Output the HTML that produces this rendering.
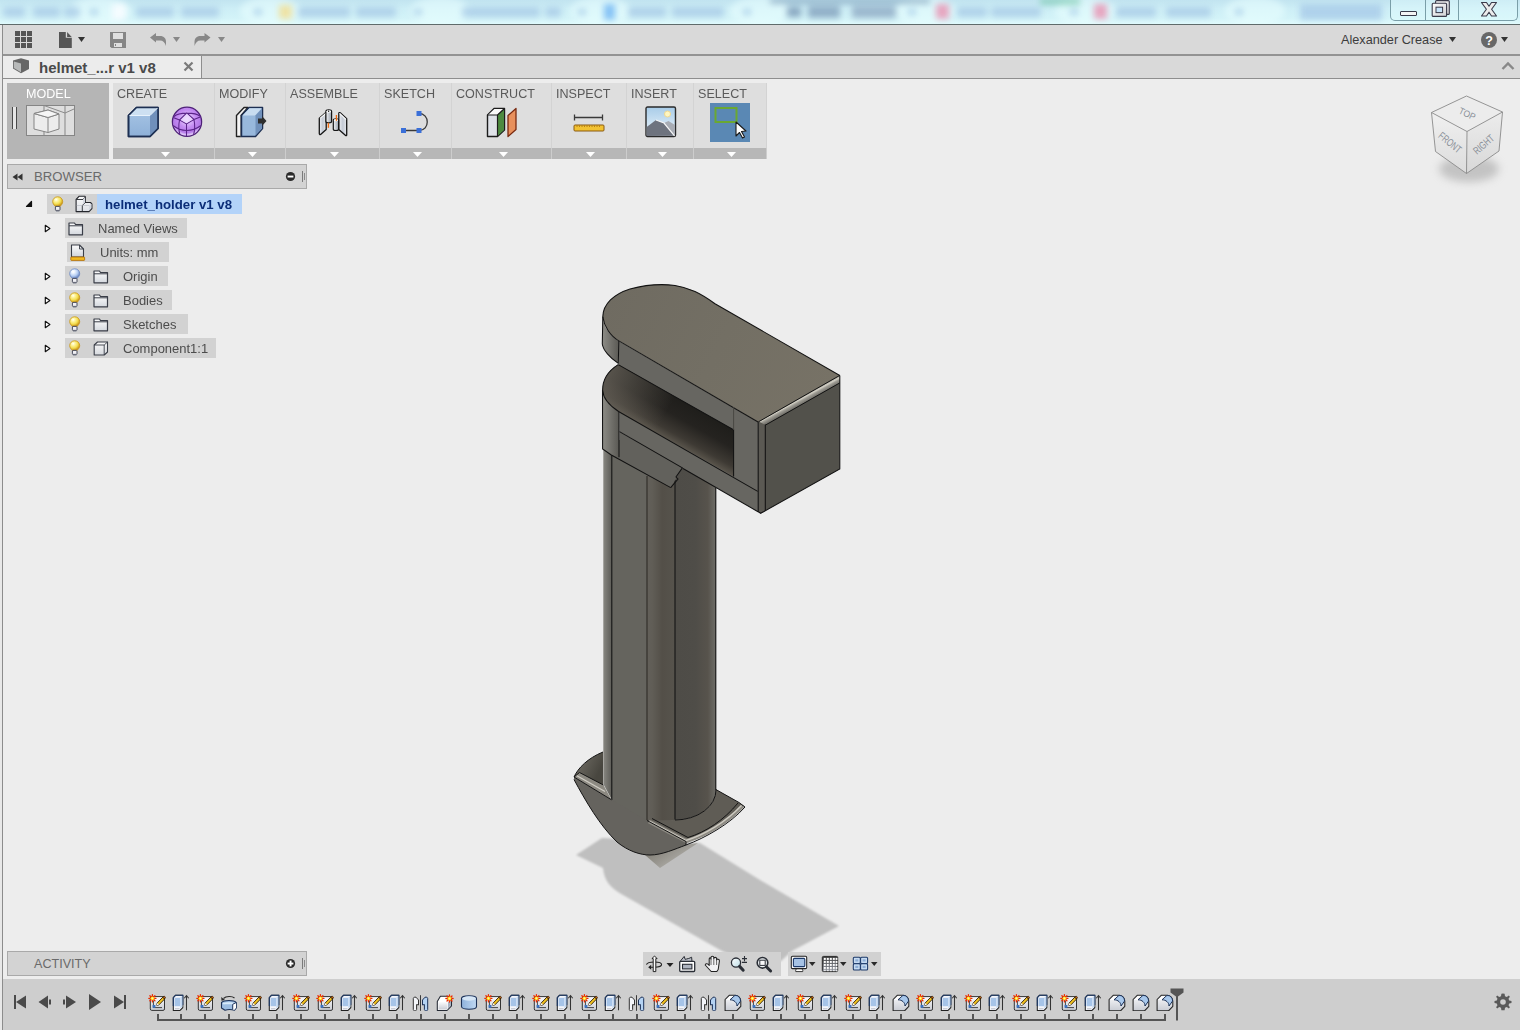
<!DOCTYPE html>
<html><head><meta charset="utf-8">
<style>
*{margin:0;padding:0;box-sizing:border-box}
html,body{width:1520px;height:1030px;overflow:hidden;background:#ededed;font-family:"Liberation Sans",sans-serif}
.a{position:absolute}
#title{left:0;top:0;width:1520px;height:24px;background:linear-gradient(180deg,#c2e4f0 0%,#cdeef6 35%,#d3f3f8 75%,#e0fafc 100%);overflow:hidden}
#tline{left:0;top:24px;width:1520px;height:1px;background:#5f6b6b}
#toolbar{left:0;top:25px;width:1520px;height:29px;background:#d9d9d9}
#tbline{left:0;top:54px;width:1520px;height:2px;background:#939393}
#tabrow{left:0;top:56px;width:1520px;height:22px;background:#d9d9d9}
#tabline{left:0;top:78px;width:1520px;height:1px;background:#8e8e8e}
#vp{left:0;top:79px;width:1520px;height:900px;background:#ededed}
#lborder{left:2px;top:25px;width:1px;height:1005px;background:#8c8c8c}
#lborder2{left:0;top:25px;width:2px;height:1005px;background:#e8e8e8}
.txt{white-space:nowrap;line-height:1}
</style></head><body>
<div id="title" class="a">
<div class="a" style="left:0;top:0;width:1520px;height:24px;filter:blur(3px)">
 <div class="a" style="left:70px;top:-4px;width:60px;height:30px;background:#eaffff;opacity:.55;border-radius:50%"></div>
 <div class="a" style="left:240px;top:-4px;width:60px;height:30px;background:#eaffff;opacity:.55;border-radius:50%"></div>
 <div class="a" style="left:410px;top:-4px;width:60px;height:30px;background:#eaffff;opacity:.55;border-radius:50%"></div>
 <div class="a" style="left:570px;top:-4px;width:60px;height:30px;background:#eaffff;opacity:.55;border-radius:50%"></div>
 <div class="a" style="left:730px;top:-4px;width:60px;height:30px;background:#eaffff;opacity:.55;border-radius:50%"></div>
 <div class="a" style="left:895px;top:-4px;width:60px;height:30px;background:#eaffff;opacity:.55;border-radius:50%"></div>
 <div class="a" style="left:1055px;top:-4px;width:60px;height:30px;background:#eaffff;opacity:.55;border-radius:50%"></div>
 <div class="a" style="left:1225px;top:-4px;width:60px;height:30px;background:#eaffff;opacity:.55;border-radius:50%"></div>
 <div class="a" style="left:3px;top:7px;width:22px;height:10px;background:#a6c8e6;opacity:.75;border-radius:3px"></div>
 <div class="a" style="left:33px;top:7px;width:27px;height:10px;background:#a6c8e6;opacity:.75;border-radius:3px"></div>
 <div class="a" style="left:64px;top:7px;width:16px;height:10px;background:#a6c8e6;opacity:.75;border-radius:3px"></div>
 <div class="a" style="left:136px;top:7px;width:38px;height:10px;background:#a6c8e6;opacity:.75;border-radius:3px"></div>
 <div class="a" style="left:181px;top:7px;width:38px;height:10px;background:#a6c8e6;opacity:.75;border-radius:3px"></div>
 <div class="a" style="left:298px;top:7px;width:52px;height:10px;background:#a6c8e6;opacity:.75;border-radius:3px"></div>
 <div class="a" style="left:356px;top:7px;width:40px;height:10px;background:#a6c8e6;opacity:.75;border-radius:3px"></div>
 <div class="a" style="left:462px;top:7px;width:78px;height:10px;background:#a6c8e6;opacity:.75;border-radius:3px"></div>
 <div class="a" style="left:545px;top:7px;width:16px;height:10px;background:#a6c8e6;opacity:.75;border-radius:3px"></div>
 <div class="a" style="left:628px;top:7px;width:38px;height:10px;background:#a6c8e6;opacity:.75;border-radius:3px"></div>
 <div class="a" style="left:672px;top:7px;width:52px;height:10px;background:#a6c8e6;opacity:.75;border-radius:3px"></div>
 <div class="a" style="left:957px;top:7px;width:30px;height:10px;background:#a6c8e6;opacity:.75;border-radius:3px"></div>
 <div class="a" style="left:991px;top:7px;width:50px;height:10px;background:#a6c8e6;opacity:.75;border-radius:3px"></div>
 <div class="a" style="left:1116px;top:7px;width:40px;height:10px;background:#a6c8e6;opacity:.75;border-radius:3px"></div>
 <div class="a" style="left:1166px;top:7px;width:45px;height:10px;background:#a6c8e6;opacity:.75;border-radius:3px"></div>
 <div class="a" style="left:90px;top:9px;width:8px;height:6px;background:#a0c4e2;opacity:.7"></div>
 <div class="a" style="left:254px;top:9px;width:8px;height:6px;background:#a0c4e2;opacity:.7"></div>
 <div class="a" style="left:414px;top:9px;width:8px;height:6px;background:#a0c4e2;opacity:.7"></div>
 <div class="a" style="left:578px;top:9px;width:8px;height:6px;background:#a0c4e2;opacity:.7"></div>
 <div class="a" style="left:743px;top:9px;width:8px;height:6px;background:#a0c4e2;opacity:.7"></div>
 <div class="a" style="left:908px;top:9px;width:8px;height:6px;background:#a0c4e2;opacity:.7"></div>
 <div class="a" style="left:1070px;top:9px;width:8px;height:6px;background:#a0c4e2;opacity:.7"></div>
 <div class="a" style="left:1235px;top:9px;width:8px;height:6px;background:#a0c4e2;opacity:.7"></div>
 <div class="a" style="left:112px;top:4px;width:14px;height:16px;background:#f6fcff;opacity:.95"></div>
 <div class="a" style="left:279px;top:5px;width:13px;height:14px;background:#eee2a0;opacity:.95"></div>
 <div class="a" style="left:604px;top:4px;width:11px;height:16px;background:#7cbcf4;opacity:.9"></div>
 <div class="a" style="left:770px;top:-2px;width:160px;height:6px;background:#6e8eac;opacity:.5"></div>
 <div class="a" style="left:787px;top:7px;width:14px;height:10px;background:#7896b4;opacity:.8"></div>
 <div class="a" style="left:808px;top:6px;width:32px;height:12px;background:#86a4c0;opacity:.85"></div>
 <div class="a" style="left:852px;top:6px;width:44px;height:12px;background:#8eaac4;opacity:.8"></div>
 <div class="a" style="left:936px;top:4px;width:13px;height:15px;background:#e890b0;opacity:.8"></div>
 <div class="a" style="left:1040px;top:-2px;width:40px;height:7px;background:#60c098;opacity:.5"></div>
 <div class="a" style="left:1094px;top:4px;width:13px;height:15px;background:#e890b0;opacity:.8"></div>
 <div class="a" style="left:1300px;top:4px;width:82px;height:16px;background:#a8cae8;opacity:.8"></div>
</div>
<div class="a" style="left:1390px;top:-2px;width:128px;height:23px;border:1px solid #7a9ea8;border-top:none;border-radius:0 0 5px 5px;background:rgba(230,255,255,.35)"></div>
<div class="a" style="left:1425px;top:0;width:1px;height:20px;background:#7a9ea8"></div>
<div class="a" style="left:1458px;top:0;width:1px;height:20px;background:#7a9ea8"></div>
<div class="a" style="left:1400px;top:11px;width:17px;height:5px;background:#f4f4f4;border:1px solid #3a3a4a;border-radius:1px"></div>
<svg class="a" style="left:1430px;top:0" width="22" height="18" viewBox="0 0 22 18">
 <defs><linearGradient id="rsg" x1="0" y1="0" x2="1" y2="1"><stop offset="0" stop-color="#fff"/><stop offset="1" stop-color="#d0d0d4"/></linearGradient></defs>
 <rect x="5.6" y="0.6" width="13.7" height="13.8" rx="1" fill="url(#rsg)" stroke="#3a3a4a" stroke-width="1.1"/>
 <rect x="2.2" y="3.2" width="14.4" height="13.2" rx="1" fill="url(#rsg)" stroke="#3a3a4a" stroke-width="1.1"/>
 <rect x="6" y="7.2" width="6.6" height="5.4" fill="#c8e4fa" stroke="#3a3a4a" stroke-width="1"/>
</svg>
<svg class="a" style="left:1479px;top:0" width="20" height="18" viewBox="0 0 20 18">
 <path d="M2.5 2.5 H7.5 L10 6.2 L12.5 2.5 H17.5 L12.6 9.2 L17.5 16 H12.5 L10 12.2 L7.5 16 H2.5 L7.4 9.2 Z" fill="#ececec" stroke="#3a3a4a" stroke-width="1.1" stroke-linejoin="round"/>
</svg>
</div>
<div id="tline" class="a"></div>
<div id="toolbar" class="a"></div>
<div id="tbline" class="a"></div>
<div id="tabrow" class="a"></div>
<div id="tabline" class="a"></div>
<div id="vp" class="a"></div>

<!-- model -->
<svg class="a" style="left:0;top:0" width="1520" height="1030" viewBox="0 0 1520 1030">
 <defs>
  <filter id="sblur" x="-10%" y="-10%" width="120%" height="120%"><feGaussianBlur stdDeviation="1.2"/></filter>
  <linearGradient id="slot" x1="0" y1="0" x2="1" y2="1" gradientUnits="userSpaceOnUse" >
  </linearGradient>
  <linearGradient id="gSlot" x1="680" y1="399.6" x2="660" y2="435" gradientUnits="userSpaceOnUse">
   <stop offset="0" stop-color="#1f1e1b"/><stop offset="0.4" stop-color="#252320"/><stop offset="0.8" stop-color="#3e3a34"/><stop offset="1" stop-color="#5a554c"/>
  </linearGradient>
  <linearGradient id="gSlotL" x1="603" y1="380" x2="665" y2="415" gradientUnits="userSpaceOnUse">
   <stop offset="0" stop-color="#6a655c" stop-opacity=".75"/><stop offset="1" stop-color="#6a655c" stop-opacity="0"/>
  </linearGradient>
  <linearGradient id="gSlot2" x1="700" y1="400" x2="720" y2="480" gradientUnits="userSpaceOnUse">
   <stop offset="0" stop-color="#1e1d1a"/><stop offset="1" stop-color="#4b4740"/>
  </linearGradient>
  <linearGradient id="gLeft" x1="602" y1="0" x2="619" y2="0" gradientUnits="userSpaceOnUse">
   <stop offset="0" stop-color="#8e8d87"/><stop offset="1" stop-color="#5a5954"/>
  </linearGradient>
  <linearGradient id="gTop" x1="610" y1="290" x2="830" y2="400" gradientUnits="userSpaceOnUse">
   <stop offset="0" stop-color="#6f6b61"/><stop offset="0.5" stop-color="#736f64"/><stop offset="1" stop-color="#777266"/>
  </linearGradient>
  <linearGradient id="gCyl" x1="647" y1="0" x2="716" y2="0" gradientUnits="userSpaceOnUse">
   <stop offset="0" stop-color="#63605a"/><stop offset="0.08" stop-color="#605d56"/><stop offset="0.22" stop-color="#534f48"/><stop offset="0.4" stop-color="#56534c"/><stop offset="0.41" stop-color="#4e4c47"/><stop offset="0.7" stop-color="#4f4d48"/><stop offset="0.88" stop-color="#57534c"/><stop offset="1" stop-color="#6e6d68"/>
  </linearGradient>
  <linearGradient id="gColL" x1="603" y1="0" x2="612" y2="0" gradientUnits="userSpaceOnUse">
   <stop offset="0" stop-color="#8a8983"/><stop offset="1" stop-color="#5b5a55"/>
  </linearGradient>
 </defs>
 <!-- shadow -->
 <path d="M576 855 L602 838 L700 843 L760 880 L839 926 L792 951 L781 961 L760 968 L722 951 L623 895 C610 888 604 880 603 868 Z" fill="#bfbfbf" filter="url(#sblur)"/>
 <!-- column -->
 <path d="M603.3 440 L603.3 784 L612 800 L612 440 Z" fill="url(#gColL)"/>
 <path d="M611.5 440 L647 440 L647 826 L612 806 Z" fill="#65645e"/>
 <path d="M647 440 L716 440 L716 790 A41 30 0 0 1 675 820 L647 826 Z" fill="url(#gCyl)"/>
 <path d="M611.8 455 V800 M675 480 V819.5 M715.8 488 V790" stroke="#141414" stroke-width="1.1" fill="none"/><path d="M647 476 V820.5" stroke="#36342f" stroke-width="1.3" fill="none"/>
 <!-- foot left flange -->
 <linearGradient id="gFl" x1="600" y1="770" x2="580" y2="760" gradientUnits="userSpaceOnUse"><stop offset="0" stop-color="#48463f"/><stop offset="1" stop-color="#6a675f"/></linearGradient>
 <linearGradient id="gTri" x1="655" y1="850" x2="665" y2="866" gradientUnits="userSpaceOnUse"><stop offset="0" stop-color="#85827a"/><stop offset="1" stop-color="#a5a39d"/></linearGradient>
 <path d="M574 777 C578 768 588 758 603 752 L603 785 Z" fill="url(#gFl)"/>
 <path d="M574 777 L579.5 772.5 L603.4 785 L611.5 799.8 Z" fill="#8c8981"/>
 <path d="M576.5 775.5 L605 791.5" stroke="#cfccc4" stroke-width="1.3"/>
 <path d="M645 855 L660 868 L698 843 L686 845 Z" fill="url(#gTri)"/>
 <path d="M574 777 L611.5 799.8 L612 800 L647 820.5 L686 841.5 L686 845 C675 849 662 855 650 855 C640 855 628 851 617 842 C600 826 585 800 574 779.5 Z" fill="#65635e"/>
 <!-- right flange top -->
 <path d="M647 820.5 L686 841.5 C705 836 728 823 744 806 L738 802 L716 789.6 A41 30 0 0 1 675 820 Z" fill="#5f5c55"/>
 <path d="M649 821.5 L686.5 841 C705 835.5 727 822.5 742.5 806" fill="none" stroke="#8e8b83" stroke-width="4"/>
 <path d="M649 821 L686 840.5 C704 835 726 822 741.5 805.5" fill="none" stroke="#cdcac1" stroke-width="1.4"/>
 <path d="M574 777 C578 768 588 758 603 752 M574 777 L579.5 772.5 M579.5 772.5 L603.4 785 M574 777 L611.5 799.8 M647 820.5 L686 841.5 L686 845 M574 779.5 C585 800 600 826 617 842 C628 851 640 855 650 855 C662 855 675 849 686 845 C705 838 730 824 745 807 L739 802.5 L716 789.6 M652 818.5 L688 837.5 C706 832 724 820 738 803 M716 789.6 A41 30 0 0 1 675 820" fill="none" stroke="#141414" stroke-width="1"/>
 <!-- head -->
 <!-- left curved sides -->
 <path d="M602.8 316.8 L602.3 344 C603 350 610 358 618.3 363.4 L618.8 341 C610 336 603 326 602.8 316.8 Z" fill="url(#gLeft)"/>
 <path d="M602.5 390 L602.6 449 L611.3 455 L619.5 457.3 L619 411.8 C610 406 603 398 602.5 390 Z" fill="url(#gLeft)"/>
 <!-- front face -->
 <path d="M618.8 341 L758.5 422.2 L758 511.7 L619.5 431.6 Z" fill="#676661"/>
 <!-- tab -->
 <path d="M619.5 431.6 L682.4 467.8 L670.7 487.6 L611.3 455 L619.5 457.3 Z" fill="#62615c"/>
 <!-- slot -->
 <path d="M618.2 364.6 L733.6 429.7 L733.6 476.4 L619 411.8 C610 406 603 398 602.6 390 C602.6 380 608 371 618.2 364.6 Z" fill="url(#gSlot)"/>
 <path d="M618.2 364.6 L733.6 429.7 L733.6 476.4 L619 411.8 C610 406 603 398 602.6 390 C602.6 380 608 371 618.2 364.6 Z" fill="url(#gSlotL)"/>
 <!-- top face -->
 <path d="M619.3 341.1 C610 336 604 326 602.8 316.8 C603 304 614 294 630 289 C645 285 660 283.5 675 285.5 C690 288 700 293 715 303.7 L839.8 375.5 L758.5 422.2 Z" fill="url(#gTop)"/>
 <!-- right face -->
 <path d="M758.5 422.2 L839.8 375.5 L839.8 469 L760.7 513.3 L758 511.7 Z" fill="#52514b"/>
 <path d="M758.5 422.2 L765.3 424.5 L765.3 511 L760.7 513.3 L758 511.7 Z" fill="#5b5953"/>
 <linearGradient id="gBev" x1="799.4" y1="398.2" x2="802.6" y2="404" gradientUnits="userSpaceOnUse"><stop offset="0" stop-color="#aeaba2"/><stop offset="0.22" stop-color="#d2cfc4"/><stop offset="0.45" stop-color="#a09e96"/><stop offset="1" stop-color="#6c6a64"/></linearGradient>
 <path d="M759 421.8 L839.8 375.6 L839.8 382.8 L765.3 425 Z" fill="url(#gBev)"/>
 <path d="M758.5 421.8 L839.8 375.4 M765.3 425.2 L839.8 382.9" stroke="#111" stroke-width="1"/>
 
 <!-- edges -->
 <g fill="none" stroke="#121212" stroke-width="1.05">
  <path d="M619.3 341.1 C610 336 604 326 602.8 316.8 C603 304 614 294 630 289 C645 285 660 283.5 675 285.5 C690 288 700 293 715 303.7 L839.8 375.5"/>
  <path d="M619.3 341.1 L758.5 422.2"/>
  <path d="M602.8 316.8 L602.3 344 C603 350 610 358 618.3 363.4 L618.8 341"/>
  <path d="M618.2 364.6 L733.6 429.7 L733.6 476.4"/>
  <path d="M618.2 364.6 C608 371 602.6 380 602.6 390 C603 398 610 406 619 411.8 L757.7 491.4"/>
  <path d="M602.5 390 L602.6 449 L611.3 455 L670.7 487.6 M683 468.5 L758 511.7"/>
  <path d="M619 411.8 V457.3"/>
  <path d="M619.5 431.6 L682.4 467.8 L676 477 L678 479 L670.7 487.6"/>
  <path d="M758.2 422.2 V511.7 L760.7 513.3 L839.8 469 V375.5"/>
  <path d="M733.6 407 V430" stroke="#45443f" stroke-width="0.9"/>
  <path d="M765.3 424.5 V511"/>
 </g>
</svg>
<div id="lborder2" class="a"></div>
<div id="lborder" class="a"></div>

<!-- toolbar icons -->
<svg class="a" style="left:15px;top:31px" width="17" height="17" viewBox="0 0 17 17" shape-rendering="crispEdges">
 <g fill="#555"><rect x="0" y="0" width="5" height="5"/><rect x="6" y="0" width="5" height="5"/><rect x="12" y="0" width="5" height="5"/>
 <rect x="0" y="6" width="5" height="5"/><rect x="6" y="6" width="5" height="5"/><rect x="12" y="6" width="5" height="5"/>
 <rect x="0" y="12" width="5" height="5"/><rect x="6" y="12" width="5" height="5"/><rect x="12" y="12" width="5" height="5"/></g>
</svg>
<svg class="a" style="left:59px;top:32px" width="28" height="17" viewBox="0 0 28 17">
 <path d="M0 0 H6.8 V5.8 H12.8 V16 H0 Z" fill="#555"/>
 <path d="M8.1 0.1 V4.9 H12.7 Z" fill="#555"/>
 <path d="M19 5 H26 L22.5 10 Z" fill="#333"/>
</svg>
<svg class="a" style="left:110px;top:32px" width="16" height="16" viewBox="0 0 16 16">
 <path d="M0 0 H16 V16 H1.5 L0 14.5 Z" fill="#868686"/>
 <rect x="3" y="1" width="10" height="6" fill="#e0e0e0"/>
 <rect x="4" y="11" width="8" height="4" fill="#e0e0e0"/>
 <rect x="5" y="12" width="1" height="2" fill="#868686"/>
</svg>
<svg class="a" style="left:150px;top:33px" width="32" height="14" viewBox="0 0 32 14">
 <path d="M0 4.5 L6 0 V3 H10 C14 3 16 5.5 16 9 V13 C15 9.5 13 7.5 10 7.5 H6 V9.5 Z" fill="#888"/>
 <path d="M23 4 H30 L26.5 9 Z" fill="#888"/>
</svg>
<svg class="a" style="left:194px;top:33px" width="32" height="14" viewBox="0 0 32 14">
 <path d="M16.5 4.5 L10.5 0 V3 H6.5 C2.5 3 0.5 5.5 0.5 9 V13 C1.5 9.5 3.5 7.5 6.5 7.5 H10.5 V9.5 Z" fill="#888"/>
 <path d="M24 4 H31 L27.5 9 Z" fill="#888"/>
</svg>
<div class="a txt" style="left:1341px;top:34px;font-size:12.7px;color:#3c3c3c;line-height:13px">Alexander Crease</div>
<svg class="a" style="left:1449px;top:37px" width="8" height="6"><path d="M0 0 H7 L3.5 5 Z" fill="#333"/></svg>
<svg class="a" style="left:1481px;top:32px" width="30" height="16" viewBox="0 0 30 16">
 <circle cx="8" cy="8" r="8" fill="#686868"/>
 <text x="8" y="12.5" text-anchor="middle" font-family="Liberation Sans" font-weight="700" font-size="12.5" fill="#fff">?</text>
 <path d="M20 5 H27 L23.5 10 Z" fill="#333"/>
</svg>
<!-- tab -->
<div class="a" style="left:3px;top:56px;width:199px;height:22px;background:#ececec;border-right:1px solid #8e8e8e"></div>
<svg class="a" style="left:12px;top:58px" width="18" height="16" viewBox="0 0 18 16">
 <path d="M1 2.5 L9 0.3 L17 2.5 L17 11 L9 15.2 L1 10.5 Z" fill="#666"/>
 <path d="M1.8 3.4 L9 5.6 L9 14.2 L1.8 10 Z" fill="#b7b9b9"/>
</svg>
<div class="a txt" style="left:39px;top:60px;font-size:15px;font-weight:700;color:#4a4a4a;line-height:15px">helmet_...r v1 v8</div>
<svg class="a" style="left:183px;top:61px" width="11" height="11" viewBox="0 0 11 11"><path d="M1.5 1.5 L9.5 9.5 M9.5 1.5 L1.5 9.5" stroke="#7a7a7a" stroke-width="2.2"/></svg>
<svg class="a" style="left:1501px;top:61px" width="14" height="10" viewBox="0 0 14 10"><path d="M1.5 8 L7 2.5 L12.5 8" fill="none" stroke="#888" stroke-width="2.4"/></svg>

<!-- ribbon -->
<div class="a" style="left:7px;top:83px;width:102px;height:76px;background:#b5b5b5"></div>
<div class="a txt" style="left:26px;top:87px;font-size:13.6px;color:#fff;line-height:13px;transform:scaleX(0.925);transform-origin:0 0">MODEL</div>
<div class="a" style="left:12px;top:107px;width:1px;height:22px;background:#4a4a4a"></div>
<div class="a" style="left:13px;top:107px;width:3px;height:22px;background:#e6e6e6"></div>
<div class="a" style="left:16px;top:107px;width:1px;height:22px;background:#4a4a4a"></div>
<svg class="a" style="left:26px;top:105px" width="49" height="31" viewBox="0 0 49 31">
 <rect x="0.5" y="0.5" width="48" height="30" fill="#dedede" stroke="#858585"/>
 <path d="M18 0.5 V30.5 M39 0.5 V30.5" stroke="#858585"/>
 <path d="M18 0.5 L39 8 L48 4" fill="none" stroke="#8a8a8a"/>
 <path d="M8 8.5 L22 5 L33 9 L33 24 L22 27.5 L8 24 Z" fill="#ededed" stroke="#858585"/>
 <path d="M8 8.5 L22 12.5 L33 9 M22 12.5 V27.5" fill="none" stroke="#858585"/>
 <path d="M8 8.5 L22 5 L33 9 L22 12.5 Z" fill="#f6f6f6" stroke="#858585"/>
</svg>
<div class="a" style="left:113px;top:83px;width:102px;height:65px;background:#dedede;border-right:1px solid #d3d3d3"></div>
<div class="a" style="left:113px;top:148px;width:102px;height:11px;background:#b7b7b7;border-right:1px solid #cdcdcd"></div>
<div class="a txt" style="left:117px;top:87px;font-size:13.6px;color:#5a5a5a;line-height:13px;transform:scaleX(0.925);transform-origin:0 0">CREATE</div>
<svg class="a" style="left:161px;top:152px" width="9" height="5"><path d="M0 0 H9 L4.5 5 Z" fill="#fff"/></svg>
<div class="a" style="left:215px;top:83px;width:71px;height:65px;background:#dedede;border-right:1px solid #d3d3d3"></div>
<div class="a" style="left:215px;top:148px;width:71px;height:11px;background:#b7b7b7;border-right:1px solid #cdcdcd"></div>
<div class="a txt" style="left:219px;top:87px;font-size:13.6px;color:#5a5a5a;line-height:13px;transform:scaleX(0.925);transform-origin:0 0">MODIFY</div>
<svg class="a" style="left:248px;top:152px" width="9" height="5"><path d="M0 0 H9 L4.5 5 Z" fill="#fff"/></svg>
<div class="a" style="left:286px;top:83px;width:94px;height:65px;background:#dedede;border-right:1px solid #d3d3d3"></div>
<div class="a" style="left:286px;top:148px;width:94px;height:11px;background:#b7b7b7;border-right:1px solid #cdcdcd"></div>
<div class="a txt" style="left:290px;top:87px;font-size:13.6px;color:#5a5a5a;line-height:13px;transform:scaleX(0.925);transform-origin:0 0">ASSEMBLE</div>
<svg class="a" style="left:330px;top:152px" width="9" height="5"><path d="M0 0 H9 L4.5 5 Z" fill="#fff"/></svg>
<div class="a" style="left:380px;top:83px;width:72px;height:65px;background:#dedede;border-right:1px solid #d3d3d3"></div>
<div class="a" style="left:380px;top:148px;width:72px;height:11px;background:#b7b7b7;border-right:1px solid #cdcdcd"></div>
<div class="a txt" style="left:384px;top:87px;font-size:13.6px;color:#5a5a5a;line-height:13px;transform:scaleX(0.925);transform-origin:0 0">SKETCH</div>
<svg class="a" style="left:413px;top:152px" width="9" height="5"><path d="M0 0 H9 L4.5 5 Z" fill="#fff"/></svg>
<div class="a" style="left:452px;top:83px;width:100px;height:65px;background:#dedede;border-right:1px solid #d3d3d3"></div>
<div class="a" style="left:452px;top:148px;width:100px;height:11px;background:#b7b7b7;border-right:1px solid #cdcdcd"></div>
<div class="a txt" style="left:456px;top:87px;font-size:13.6px;color:#5a5a5a;line-height:13px;transform:scaleX(0.925);transform-origin:0 0">CONSTRUCT</div>
<svg class="a" style="left:499px;top:152px" width="9" height="5"><path d="M0 0 H9 L4.5 5 Z" fill="#fff"/></svg>
<div class="a" style="left:552px;top:83px;width:75px;height:65px;background:#dedede;border-right:1px solid #d3d3d3"></div>
<div class="a" style="left:552px;top:148px;width:75px;height:11px;background:#b7b7b7;border-right:1px solid #cdcdcd"></div>
<div class="a txt" style="left:556px;top:87px;font-size:13.6px;color:#5a5a5a;line-height:13px;transform:scaleX(0.925);transform-origin:0 0">INSPECT</div>
<svg class="a" style="left:586px;top:152px" width="9" height="5"><path d="M0 0 H9 L4.5 5 Z" fill="#fff"/></svg>
<div class="a" style="left:627px;top:83px;width:67px;height:65px;background:#dedede;border-right:1px solid #d3d3d3"></div>
<div class="a" style="left:627px;top:148px;width:67px;height:11px;background:#b7b7b7;border-right:1px solid #cdcdcd"></div>
<div class="a txt" style="left:631px;top:87px;font-size:13.6px;color:#5a5a5a;line-height:13px;transform:scaleX(0.925);transform-origin:0 0">INSERT</div>
<svg class="a" style="left:658px;top:152px" width="9" height="5"><path d="M0 0 H9 L4.5 5 Z" fill="#fff"/></svg>
<div class="a" style="left:694px;top:83px;width:73px;height:65px;background:#dedede;border-right:1px solid #d3d3d3"></div>
<div class="a" style="left:694px;top:148px;width:73px;height:11px;background:#b7b7b7;border-right:1px solid #cdcdcd"></div>
<div class="a txt" style="left:698px;top:87px;font-size:13.6px;color:#5a5a5a;line-height:13px;transform:scaleX(0.925);transform-origin:0 0">SELECT</div>
<svg class="a" style="left:727px;top:152px" width="9" height="5"><path d="M0 0 H9 L4.5 5 Z" fill="#fff"/></svg>

<svg class="a" style="left:127px;top:106px" width="33" height="32" viewBox="0 0 33 32">
 <defs><linearGradient id="cf" x1="0" y1="0" x2="0" y2="1"><stop offset="0" stop-color="#a8c6e6"/><stop offset="1" stop-color="#8eb0d8"/></linearGradient></defs>
 <path d="M1.5 9.5 L9.5 1.5 H31 V22.5 L23 30.5 H1.5 Z" fill="url(#cf)" stroke="#1d2f52" stroke-width="1.6" stroke-linejoin="round"/>
 <path d="M1.5 9.5 L9.5 1.5 H31 L23 9.5 Z" fill="#cde0f2"/>
 <path d="M23 9.5 L31 1.5 V22.5 L23 30.5 Z" fill="#7090bb"/>
 <path d="M1.5 9.5 L9.5 1.5 H31 V22.5 L23 30.5 H1.5 Z" fill="none" stroke="#1d2f52" stroke-width="1.6" stroke-linejoin="round"/>
 <path d="M2.5 9.5 H23 L30.5 2" fill="none" stroke="#e8f2fc" stroke-width="1"/>
</svg>
<svg class="a" style="left:171px;top:106px" width="32" height="32" viewBox="0 0 32 32">
 <defs><radialGradient id="sg" cx="0.5" cy="0.4" r="0.55"><stop offset="0" stop-color="#f2e4ff"/><stop offset="0.55" stop-color="#c48cf2"/><stop offset="0.85" stop-color="#b57ae8"/><stop offset="1" stop-color="#e0c8fa"/></radialGradient></defs>
 <circle cx="16" cy="15.8" r="14.6" fill="url(#sg)" stroke="#4e2078" stroke-width="1.3"/>
 <path d="M15.8 7 L8.5 14 L15.5 18 L23 13.5 Z M15.5 18 V30.3 M3 10.5 C8 6 24 6 29.5 10.5 M8.5 14 L2.2 11.5 M23 13.5 L29.8 10.8 M2.2 19.5 C7 23.5 12 24.5 15.5 24.5 C19 24.5 25 23.5 29.8 19.5 M8.5 14 C7.5 19 7.5 24 9 29 M23 13.5 C24 19 24 24 22.5 29" fill="none" stroke="#5a2488" stroke-width="1.05"/>
 <path d="M15.8 7.5 L9.5 14 L15.5 17.3 L22 13.5 Z" fill="#ecdcff" opacity=".7"/>
</svg>
<svg class="a" style="left:235px;top:106px" width="33" height="32" viewBox="0 0 33 32">
 <path d="M1.5 9.5 L9 1.5 H13 L6 9.5 V30.5 H1.5 Z" fill="#f4f4f4" stroke="#222" stroke-width="1.4" stroke-linejoin="round"/>
 <path d="M6 30.5 V9.5" stroke="#bbb" stroke-width="1"/>
 <path d="M6.5 9.5 L14 1.5 H27.5 V22.5 L20.5 30.5 H6.5 Z" fill="#98b8dc" stroke="#1d2f52" stroke-width="1.5" stroke-linejoin="round"/>
 <path d="M7.5 9.5 L14.5 2.2 H26.8 L20 9.5 Z" fill="#c8dcf0"/>
 <path d="M20.5 9.5 L27 2.5 V22.5 L20.5 29.5 Z" fill="#7191bb"/>
 <path d="M23 12.5 H27 V10 L31.5 15 L27 20 V17.5 H23 Z" fill="#2e2e2e"/>
</svg>
<svg class="a" style="left:318px;top:108px" width="31" height="29" viewBox="0 0 31 29">
 <defs><linearGradient id="asg" x1="0" y1="0" x2="1" y2="0"><stop offset="0" stop-color="#eef0f4"/><stop offset="0.5" stop-color="#c4cad4"/><stop offset="1" stop-color="#e6e9ee"/></linearGradient>
 <linearGradient id="acg" x1="0" y1="0" x2="1" y2="0"><stop offset="0" stop-color="#f2f4f6"/><stop offset="1" stop-color="#9aa2ae"/></linearGradient></defs>
 <path d="M1.3 10.2 L8.2 4.2 V21.4 L2.6 26.4 C1.8 26.8 1.3 26.4 1.3 25.6 Z" fill="url(#asg)" stroke="#151515" stroke-width="1.3" stroke-linejoin="round"/>
 <path d="M2 10.4 L8 5.2" stroke="#fff" stroke-width="1.2"/>
 <path d="M7.9 3.3 C7.9 1.3 13.6 1.3 13.6 3.3 V13.6 C13.6 15.3 7.9 15.3 7.9 13.6 Z" fill="url(#acg)" stroke="#151515" stroke-width="1.2"/>
 <ellipse cx="10.75" cy="3.4" rx="2.3" ry="1.2" fill="#fff"/><circle cx="10.6" cy="3.3" r="0.7" fill="#111"/>
 <path d="M10.4 14.8 V19.8" stroke="#f06a10" stroke-width="1.3"/>
 <path d="M20.8 5.4 C20.8 4.6 21.6 4.3 22.2 4.8 L28.7 10.8 V27 C28.7 27.6 28.2 27.9 27.6 27.5 L20.8 21.6 Z" fill="url(#asg)" stroke="#151515" stroke-width="1.3" stroke-linejoin="round"/>
 <path d="M21.6 5.4 L28 11.4" stroke="#fff" stroke-width="1.2"/>
 <path d="M15.3 12.2 C15.3 10.4 20.6 10.4 20.6 12.2 V21.2 C20.6 22.9 15.3 22.9 15.3 21.2 Z" fill="url(#acg)" stroke="#151515" stroke-width="1.2"/>
 <ellipse cx="17.95" cy="12.2" rx="2.2" ry="1.1" fill="#fff"/>
 <path d="M18.4 7 V12.8" stroke="#f06a10" stroke-width="1.3"/>
</svg>
<svg class="a" style="left:400px;top:110px" width="33" height="25" viewBox="0 0 33 25">
 <path d="M3.5 20.5 H19 M19 3.5 C30 3.5 30 20.5 19 20.5" fill="none" stroke="#3a3a3a" stroke-width="1.3"/>
 <rect x="1" y="18" width="5" height="5" fill="#3a6fd8"/><rect x="16.5" y="18" width="5" height="5" fill="#3a6fd8"/><rect x="16.5" y="1" width="5" height="5" fill="#3a6fd8"/>
</svg>
<svg class="a" style="left:486px;top:107px" width="33" height="31" viewBox="0 0 33 31">
 <path d="M1.5 8 L8 1.5 H18.5 V23 L11.5 29.5 H1.5 Z" fill="#dfe2e8" stroke="#1c1c1c" stroke-width="1.4" stroke-linejoin="round"/>
 <path d="M2 8 L8.5 2 H18 L11.5 8 Z" fill="#fafafa"/>
 <path d="M11.5 8 L18 2 V23 L11.5 29 Z" fill="#4d8a40"/>
 <path d="M1.5 8 H11.5 V29.5 M11.5 8 L18.5 1.5" fill="none" stroke="#1c1c1c" stroke-width="1.2"/>
 <path d="M22 8.5 L30 1.5 V22.5 L22 29.5 Z" fill="#e8905c" stroke="#7a2a10" stroke-width="1.3" stroke-linejoin="round"/>
</svg>
<svg class="a" style="left:573px;top:113px" width="32" height="19" viewBox="0 0 32 19">
 <path d="M1.5 4.5 H29.5 M1.5 1.5 V7.5 M29.5 1.5 V7.5" stroke="#3a3a3a" stroke-width="1.3"/>
 <rect x="1" y="12" width="30" height="6" rx="1" fill="#f2c232" stroke="#8a5a10" stroke-width="1"/>
 <path d="M4 12.5 V14 M6.5 12.5 V14 M9 12.5 V14 M11.5 12.5 V14 M14 12.5 V14 M16.5 12.5 V14 M19 12.5 V14 M21.5 12.5 V14 M24 12.5 V14 M26.5 12.5 V14" stroke="#a87010" stroke-width="0.8"/>
</svg>
<svg class="a" style="left:645px;top:106px" width="32" height="32" viewBox="0 0 32 32">
 <defs><linearGradient id="sky" x1="0" y1="0" x2="0" y2="1"><stop offset="0" stop-color="#a8cce8"/><stop offset="1" stop-color="#eef6fc"/></linearGradient></defs>
 <rect x="1" y="1" width="29.5" height="29.5" rx="1.5" fill="url(#sky)" stroke="#2a2a2a" stroke-width="1.4"/>
 <circle cx="22.5" cy="8" r="3" fill="#fff6c0" stroke="#f0d890" stroke-width="1"/>
 <path d="M1.7 30 V21 L11 14 L19 17 L29.5 29.8 Z" fill="#6e737e"/>
 <path d="M19 17 L23.5 15 L30 19 V29.8 Z" fill="#a8acb4"/>
 <path d="M11 14 L19 17 L29.5 29.8" fill="none" stroke="#f6f6f6" stroke-width="1.2"/>
</svg>
<div class="a" style="left:710px;top:103px;width:40px;height:39px;background:#5a88b4"></div>
<svg class="a" style="left:712px;top:106px" width="36" height="34" viewBox="0 0 36 34">
 <rect x="3.5" y="2" width="21" height="14" fill="none" stroke="#6aa832" stroke-width="2"/>
 <path d="M24 16 V30 L27.5 26.5 L30.5 32 L32.5 31 L29.5 25.5 L34 25 Z" fill="#fff" stroke="#1a1a1a" stroke-width="1.1" stroke-linejoin="round"/>
</svg>

<!-- browser -->
<div class="a" style="left:7px;top:164px;width:300px;height:25px;background:#d3d3d3;border:1px solid #a9a9a9"></div>
<svg class="a" style="left:12px;top:173px" width="11" height="8" viewBox="0 0 11 8"><path d="M0.5 4 L5.5 0.5 V7.5 Z M5.5 4 L10.5 0.5 V7.5 Z" fill="#333"/></svg>
<div class="a txt" style="left:34px;top:170px;font-size:13.2px;color:#6a6a6a;line-height:13px">BROWSER</div>
<svg class="a" style="left:285px;top:171px" width="11" height="11" viewBox="0 0 11 11"><circle cx="5.5" cy="5.5" r="4.6" fill="#2a2a2a"/><rect x="2.6" y="4.6" width="5.8" height="1.9" fill="#fff"/></svg>
<div class="a" style="left:302px;top:171px;width:1px;height:11px;background:#7a7a7a"></div>
<div class="a" style="left:304px;top:173px;width:1px;height:7px;background:#8a8a8a"></div>
<!-- row1 -->
<svg class="a" style="left:25px;top:200px" width="8" height="8" viewBox="0 0 8 8"><path d="M1.5 6.5 L6.5 1.5 V6.5 Z" fill="#111" stroke="#111" stroke-width="1.2" stroke-linejoin="round"/></svg>
<div class="a" style="left:47px;top:194px;width:50px;height:20px;background:#d2d2d2"></div>
<div class="a" style="left:97px;top:194px;width:145px;height:20px;background:#b3d3f9"></div>
<svg class="a" style="left:52px;top:196px" width="12" height="17" viewBox="0 0 12 17">
 <defs><radialGradient id="bg52196" cx="0.35" cy="0.3" r="0.7"><stop offset="0" stop-color="#fff"/><stop offset="0.2" stop-color="#fff8b0"/><stop offset="0.65" stop-color="#f4de50"/><stop offset="1" stop-color="#c89418"/></radialGradient></defs>
 <path d="M5.7 0.8 C8.6 0.8 10.7 2.9 10.7 5.6 C10.7 7.6 9.6 8.7 8.2 10.4 H3.2 C1.8 8.7 0.7 7.6 0.7 5.6 C0.7 2.9 2.8 0.8 5.7 0.8 Z" fill="url(#bg52196)" stroke="#c89418" stroke-width="0.8"/>
 <rect x="3.4" y="10.4" width="4.6" height="4" rx="0.6" fill="#f0f0f4" stroke="#4a4e5e" stroke-width="1"/>
 <rect x="4" y="14.6" width="3.4" height="1.2" fill="#8a8e9a" opacity=".8"/>
</svg>
<svg class="a" style="left:75px;top:195px" width="18" height="18" viewBox="0 0 18 18">
 <defs><linearGradient id="rcg" x1="0" y1="0" x2="0" y2="1"><stop offset="0" stop-color="#fafafa"/><stop offset="1" stop-color="#dde0e6"/></linearGradient></defs>
 <path d="M1.1 4.5 L4.2 1.2 H9.8 C10.2 1.2 10.3 1.6 10.3 2 V7.5 H15.5 L16.9 8.8 V13.5 L14 16.6 H1.1 Z" fill="url(#rcg)" stroke="#25272d" stroke-width="1.1" stroke-linejoin="round"/>
 <path d="M10.3 7.5 L7.3 10.5 V16.6 M1.6 4.5 H8 L10 2.2" fill="none" stroke="#25272d" stroke-width="0.9"/>
 <path d="M8 4.8 L10 2.6 V7.3 L8 9.5 Z M14 10.5 L16.4 8.8 V13.3 L14 15.8 Z" fill="#d4d8e0"/>
 <path d="M1.8 10.5 H7 M7.8 10.5 H14" stroke="#c0c4cc" stroke-width="0.8"/>
</svg>
<div class="a txt" style="left:105px;top:198px;font-size:13.7px;font-weight:700;color:#0b2d78;line-height:13px;transform:scaleX(0.965);transform-origin:0 0">helmet_holder v1 v8</div>
<div class="a" style="left:65px;top:218px;width:122px;height:20px;background:#d2d2d2"></div>
<svg class="a" style="left:44px;top:224px" width="7" height="9" viewBox="0 0 7 9"><path d="M1.3 1.3 L5.9 4.5 L1.3 7.7 Z" fill="#fff" stroke="#111" stroke-width="1.15" stroke-linejoin="round"/></svg>
<svg class="a" style="left:68px;top:222px" width="16" height="14" viewBox="0 0 16 14">
 <defs><linearGradient id="fg68222" x1="0" y1="0" x2="0" y2="1"><stop offset="0" stop-color="#fdfdfd"/><stop offset="1" stop-color="#d4d8de"/></linearGradient></defs>
 <path d="M1 1 H6.5 L7.5 2.5 H14.5 V12.8 H1 Z" fill="url(#fg68222)" stroke="#3a3e48" stroke-width="1.2" stroke-linejoin="round"/>
 <path d="M1 3.8 H14.5" stroke="#3a3e48" stroke-width="1"/>
</svg>
<div class="a txt" style="left:98px;top:222px;font-size:13.6px;color:#4c4c4c;line-height:13px;transform:scaleX(0.955);transform-origin:0 0">Named Views</div>
<div class="a" style="left:67px;top:242px;width:102px;height:20px;background:#d2d2d2"></div>
<svg class="a" style="left:70px;top:244px" width="16" height="17" viewBox="0 0 16 17">
 <defs><linearGradient id="ug" x1="0" y1="0" x2="0" y2="1"><stop offset="0" stop-color="#fdfdfd"/><stop offset="1" stop-color="#d0d4da"/></linearGradient></defs>
 <path d="M1.5 1 H9.5 L13.5 5 V13 H1.5 Z" fill="url(#ug)" stroke="#3a3e48" stroke-width="1.1" stroke-linejoin="round"/>
 <path d="M9.5 1 V5 H13.5" fill="none" stroke="#3a3e48" stroke-width="0.9"/>
 <rect x="0.8" y="13" width="13.8" height="3.4" rx="0.6" fill="#f0b820" stroke="#b06a00" stroke-width="0.8"/>
</svg>
<div class="a txt" style="left:100px;top:246px;font-size:13.6px;color:#4c4c4c;line-height:13px;transform:scaleX(0.955);transform-origin:0 0">Units: mm</div>
<div class="a" style="left:65px;top:266px;width:103px;height:20px;background:#d2d2d2"></div>
<svg class="a" style="left:44px;top:272px" width="7" height="9" viewBox="0 0 7 9"><path d="M1.3 1.3 L5.9 4.5 L1.3 7.7 Z" fill="#fff" stroke="#111" stroke-width="1.15" stroke-linejoin="round"/></svg>
<svg class="a" style="left:93px;top:270px" width="16" height="14" viewBox="0 0 16 14">
 <defs><linearGradient id="fg93270" x1="0" y1="0" x2="0" y2="1"><stop offset="0" stop-color="#fdfdfd"/><stop offset="1" stop-color="#d4d8de"/></linearGradient></defs>
 <path d="M1 1 H6.5 L7.5 2.5 H14.5 V12.8 H1 Z" fill="url(#fg93270)" stroke="#3a3e48" stroke-width="1.2" stroke-linejoin="round"/>
 <path d="M1 3.8 H14.5" stroke="#3a3e48" stroke-width="1"/>
</svg>
<svg class="a" style="left:69px;top:268px" width="12" height="17" viewBox="0 0 12 17">
 <defs><radialGradient id="bg69268" cx="0.35" cy="0.3" r="0.7"><stop offset="0" stop-color="#fff"/><stop offset="0.2" stop-color="#f0f6ff"/><stop offset="0.65" stop-color="#b4ccf2"/><stop offset="1" stop-color="#6a86c0"/></radialGradient></defs>
 <path d="M5.7 0.8 C8.6 0.8 10.7 2.9 10.7 5.6 C10.7 7.6 9.6 8.7 8.2 10.4 H3.2 C1.8 8.7 0.7 7.6 0.7 5.6 C0.7 2.9 2.8 0.8 5.7 0.8 Z" fill="url(#bg69268)" stroke="#6a86c0" stroke-width="0.8"/>
 <rect x="3.4" y="10.4" width="4.6" height="4" rx="0.6" fill="#f0f0f4" stroke="#4a4e5e" stroke-width="1"/>
 <rect x="4" y="14.6" width="3.4" height="1.2" fill="#8a8e9a" opacity=".8"/>
</svg>
<div class="a txt" style="left:123px;top:270px;font-size:13.6px;color:#4c4c4c;line-height:13px;transform:scaleX(0.955);transform-origin:0 0">Origin</div>
<div class="a" style="left:65px;top:290px;width:107px;height:20px;background:#d2d2d2"></div>
<svg class="a" style="left:44px;top:296px" width="7" height="9" viewBox="0 0 7 9"><path d="M1.3 1.3 L5.9 4.5 L1.3 7.7 Z" fill="#fff" stroke="#111" stroke-width="1.15" stroke-linejoin="round"/></svg>
<svg class="a" style="left:93px;top:294px" width="16" height="14" viewBox="0 0 16 14">
 <defs><linearGradient id="fg93294" x1="0" y1="0" x2="0" y2="1"><stop offset="0" stop-color="#fdfdfd"/><stop offset="1" stop-color="#d4d8de"/></linearGradient></defs>
 <path d="M1 1 H6.5 L7.5 2.5 H14.5 V12.8 H1 Z" fill="url(#fg93294)" stroke="#3a3e48" stroke-width="1.2" stroke-linejoin="round"/>
 <path d="M1 3.8 H14.5" stroke="#3a3e48" stroke-width="1"/>
</svg>
<svg class="a" style="left:69px;top:292px" width="12" height="17" viewBox="0 0 12 17">
 <defs><radialGradient id="bg69292" cx="0.35" cy="0.3" r="0.7"><stop offset="0" stop-color="#fff"/><stop offset="0.2" stop-color="#fff8b0"/><stop offset="0.65" stop-color="#f4de50"/><stop offset="1" stop-color="#c89418"/></radialGradient></defs>
 <path d="M5.7 0.8 C8.6 0.8 10.7 2.9 10.7 5.6 C10.7 7.6 9.6 8.7 8.2 10.4 H3.2 C1.8 8.7 0.7 7.6 0.7 5.6 C0.7 2.9 2.8 0.8 5.7 0.8 Z" fill="url(#bg69292)" stroke="#c89418" stroke-width="0.8"/>
 <rect x="3.4" y="10.4" width="4.6" height="4" rx="0.6" fill="#f0f0f4" stroke="#4a4e5e" stroke-width="1"/>
 <rect x="4" y="14.6" width="3.4" height="1.2" fill="#8a8e9a" opacity=".8"/>
</svg>
<div class="a txt" style="left:123px;top:294px;font-size:13.6px;color:#4c4c4c;line-height:13px;transform:scaleX(0.955);transform-origin:0 0">Bodies</div>
<div class="a" style="left:65px;top:314px;width:123px;height:20px;background:#d2d2d2"></div>
<svg class="a" style="left:44px;top:320px" width="7" height="9" viewBox="0 0 7 9"><path d="M1.3 1.3 L5.9 4.5 L1.3 7.7 Z" fill="#fff" stroke="#111" stroke-width="1.15" stroke-linejoin="round"/></svg>
<svg class="a" style="left:93px;top:318px" width="16" height="14" viewBox="0 0 16 14">
 <defs><linearGradient id="fg93318" x1="0" y1="0" x2="0" y2="1"><stop offset="0" stop-color="#fdfdfd"/><stop offset="1" stop-color="#d4d8de"/></linearGradient></defs>
 <path d="M1 1 H6.5 L7.5 2.5 H14.5 V12.8 H1 Z" fill="url(#fg93318)" stroke="#3a3e48" stroke-width="1.2" stroke-linejoin="round"/>
 <path d="M1 3.8 H14.5" stroke="#3a3e48" stroke-width="1"/>
</svg>
<svg class="a" style="left:69px;top:316px" width="12" height="17" viewBox="0 0 12 17">
 <defs><radialGradient id="bg69316" cx="0.35" cy="0.3" r="0.7"><stop offset="0" stop-color="#fff"/><stop offset="0.2" stop-color="#fff8b0"/><stop offset="0.65" stop-color="#f4de50"/><stop offset="1" stop-color="#c89418"/></radialGradient></defs>
 <path d="M5.7 0.8 C8.6 0.8 10.7 2.9 10.7 5.6 C10.7 7.6 9.6 8.7 8.2 10.4 H3.2 C1.8 8.7 0.7 7.6 0.7 5.6 C0.7 2.9 2.8 0.8 5.7 0.8 Z" fill="url(#bg69316)" stroke="#c89418" stroke-width="0.8"/>
 <rect x="3.4" y="10.4" width="4.6" height="4" rx="0.6" fill="#f0f0f4" stroke="#4a4e5e" stroke-width="1"/>
 <rect x="4" y="14.6" width="3.4" height="1.2" fill="#8a8e9a" opacity=".8"/>
</svg>
<div class="a txt" style="left:123px;top:318px;font-size:13.6px;color:#4c4c4c;line-height:13px;transform:scaleX(0.955);transform-origin:0 0">Sketches</div>
<div class="a" style="left:65px;top:338px;width:151px;height:20px;background:#d2d2d2"></div>
<svg class="a" style="left:44px;top:344px" width="7" height="9" viewBox="0 0 7 9"><path d="M1.3 1.3 L5.9 4.5 L1.3 7.7 Z" fill="#fff" stroke="#111" stroke-width="1.15" stroke-linejoin="round"/></svg>
<svg class="a" style="left:93px;top:341px" width="16" height="15" viewBox="0 0 16 15">
 <defs><linearGradient id="cg" x1="0" y1="0" x2="0" y2="1"><stop offset="0" stop-color="#fafafa"/><stop offset="1" stop-color="#d6d9de"/></linearGradient></defs>
 <path d="M1.2 4 L4.5 1 H14.5 V11 L11.2 14 H1.2 Z" fill="url(#cg)" stroke="#3a3e48" stroke-width="1.1" stroke-linejoin="round"/>
 <path d="M1.2 4 H11.2 V14 M11.2 4 L14.5 1" fill="none" stroke="#3a3e48" stroke-width="0.9"/>
</svg>
<svg class="a" style="left:69px;top:340px" width="12" height="17" viewBox="0 0 12 17">
 <defs><radialGradient id="bg69340" cx="0.35" cy="0.3" r="0.7"><stop offset="0" stop-color="#fff"/><stop offset="0.2" stop-color="#fff8b0"/><stop offset="0.65" stop-color="#f4de50"/><stop offset="1" stop-color="#c89418"/></radialGradient></defs>
 <path d="M5.7 0.8 C8.6 0.8 10.7 2.9 10.7 5.6 C10.7 7.6 9.6 8.7 8.2 10.4 H3.2 C1.8 8.7 0.7 7.6 0.7 5.6 C0.7 2.9 2.8 0.8 5.7 0.8 Z" fill="url(#bg69340)" stroke="#c89418" stroke-width="0.8"/>
 <rect x="3.4" y="10.4" width="4.6" height="4" rx="0.6" fill="#f0f0f4" stroke="#4a4e5e" stroke-width="1"/>
 <rect x="4" y="14.6" width="3.4" height="1.2" fill="#8a8e9a" opacity=".8"/>
</svg>
<div class="a txt" style="left:123px;top:342px;font-size:13.6px;color:#4c4c4c;line-height:13px;transform:scaleX(0.955);transform-origin:0 0">Component1:1</div>



<!-- viewcube -->
<svg class="a" style="left:1420px;top:90px" width="100" height="100" viewBox="1420 90 100 100">
 <defs>
  <filter id="vcs" x="-50%" y="-50%" width="200%" height="200%"><feGaussianBlur stdDeviation="4"/></filter>
  <linearGradient id="vcf" x1="0" y1="0" x2="0" y2="1"><stop offset="0" stop-color="#f0f0f0"/><stop offset="1" stop-color="#dcdcdc"/></linearGradient>
  <linearGradient id="vcr" x1="0" y1="0" x2="0" y2="1"><stop offset="0" stop-color="#ececec"/><stop offset="1" stop-color="#d8d8d8"/></linearGradient>
 </defs>
 <ellipse cx="1469" cy="169" rx="30" ry="13" fill="#9a9a9a" opacity=".5" filter="url(#vcs)"/>
 <path d="M1431.5 112.5 L1466.5 96 L1502.5 112 L1467 131.5 Z" fill="#ececec"/>
 <path d="M1431.5 112.5 L1467 131.5 L1466.5 173.5 L1435.5 151.5 Z" fill="url(#vcf)"/>
 <path d="M1467 131.5 L1502.5 112 L1499 151 L1466.5 173.5 Z" fill="url(#vcr)"/>
 <path d="M1431.5 112.5 L1466.5 96 L1502.5 112 L1467 131.5 Z M1431.5 112.5 L1435.5 151.5 L1466.5 173.5 L1499 151 L1502.5 112 M1467 131.5 L1466.5 173.5" fill="none" stroke="#8a8a8a" stroke-width="0.9"/>
 <text x="0" y="0" transform="translate(1458,113) rotate(25) scale(1,1.1)" font-family="Liberation Sans" font-size="8.5" fill="#8a9098">TOP</text>
 <text x="0" y="0" transform="translate(1437.5,137) rotate(39) scale(0.9,1.25)" font-family="Liberation Sans" font-size="8.5" fill="#8a9098">FRONT</text>
 <text x="0" y="0" transform="translate(1477,155) rotate(-41) scale(0.9,1.25)" font-family="Liberation Sans" font-size="8.5" fill="#8a9098">RIGHT</text>
</svg>
<!-- navbar -->
<div class="a" style="left:643px;top:952px;width:138px;height:24px;background:#d1d1d1"></div>
<div class="a" style="left:788px;top:952px;width:93px;height:24px;background:#d1d1d1"></div>
<svg class="a" style="left:643px;top:952px" width="240" height="24" viewBox="643 952 240 24">
 <defs><linearGradient id="mon" x1="0" y1="0" x2="0" y2="1"><stop offset="0" stop-color="#b0ccec"/><stop offset="1" stop-color="#7aa0d0"/></linearGradient></defs>
 <defs><linearGradient id="zg" x1="0" y1="0" x2="1" y2="1"><stop offset="0" stop-color="#ffffff"/><stop offset="1" stop-color="#bcdde6"/></linearGradient></defs>
 <path d="M646.5 964.6 C647 962.6 651 962 654.5 962 C658.5 962 661.6 963 661.6 964.6 C661.6 966.2 658 967.3 654.5 967.3 H649.5" fill="none" stroke="#222" stroke-width="1.05"/>
 <path d="M651.2 964.8 L648.2 967.3 L651.2 969.8 Z" fill="#222"/>
 <path d="M653.2 971.6 V958.6 H651.9 L654.5 956 L657.1 958.6 H655.8 V971.6 Z" fill="#fff" stroke="#222" stroke-width="1" stroke-linejoin="round"/>
 <path d="M680 961.5 L684.2 956.4 L685.2 959.4 C687 958.8 689.5 958.5 691.6 957.2 L692 961.5 Z" fill="#b9bdc6" stroke="#2a2e36" stroke-width="1"/>
 <rect x="679.7" y="961.3" width="15" height="10.2" rx="1" fill="#fff" stroke="#2a2e36" stroke-width="1.3"/>
 <rect x="682.5" y="964.3" width="9.4" height="4.6" fill="#aeb4c0" stroke="#2a2e36" stroke-width="1.1"/>
 <path d="M705.2 965 C705.5 963.5 707 963.3 708 964.2 L709.2 965.5 V959 C709.2 957.5 711 957.5 711 959 V957.5 C711 955.8 713.8 955.8 713.8 957.5 V958.5 C713.8 957 716.6 957 716.6 958.5 V960 C716.6 958.5 719.8 959 719.4 961 L718.2 969.5 L716.8 971.5 H711.2 Z" fill="#f2f2f4" stroke="#222" stroke-width="1.05" stroke-linejoin="round"/>
 <path d="M711 959 V965 M713.8 958.5 V965 M716.6 960 V965" stroke="#444" stroke-width="0.8"/>
 <circle cx="736" cy="962.6" r="4.6" fill="url(#zg)" stroke="#2a2e36" stroke-width="1.3"/>
 <path d="M739.6 966.4 L743.2 970.2" stroke="#2a2e36" stroke-width="3" stroke-linecap="round"/>
 <path d="M742 958.6 H747 M744.5 956 V961.2 M742 962.4 H747" stroke="#2a2e36" stroke-width="1.1"/>
 <circle cx="762.5" cy="962.8" r="5.3" fill="#f0f4f6" stroke="#2a2e36" stroke-width="1.6"/>
 <rect x="759.8" y="960.2" width="5.4" height="5.2" fill="#f8f8fa" stroke="#2a2e36" stroke-width="1"/>
 <path d="M766.4 966.8 L770.6 971" stroke="#2a2e36" stroke-width="3" stroke-linecap="round"/>
 <path d="M666.5 963 H673.5 L670 967 Z" fill="#222"/>
 <defs><linearGradient id="gg" x1="0" y1="0" x2="0" y2="1"><stop offset="0" stop-color="#3a3a3a"/><stop offset="1" stop-color="#8e939e"/></linearGradient></defs>
 <path d="M795.8 971.6 C795.3 970 796.2 968.6 797.5 968.6 H801 C802.3 968.6 803.2 970 802.7 971.6 Z" fill="#fff" stroke="#222" stroke-width="0.9"/>
 <rect x="791.3" y="956.3" width="15.4" height="12.3" rx="1.2" fill="#fafafa" stroke="#222" stroke-width="1.05"/>
 <rect x="793.4" y="958.4" width="11.4" height="8.2" rx="1" fill="#a6c2e4" stroke="#1d3a6a" stroke-width="1.1"/>
 <path d="M809 962 H815.5 L812.25 966 Z" fill="#2a2a2a"/>
 <rect x="822.3" y="956.4" width="15.4" height="15.2" rx="1.2" fill="url(#gg)" stroke="#2a2a2a" stroke-width="1"/>
 <g fill="#fff"><rect x="823.8" y="957.9" width="2" height="2"/><rect x="826.8" y="957.9" width="2" height="2"/><rect x="829.8" y="957.9" width="2" height="2"/><rect x="832.8" y="957.9" width="2" height="2"/><rect x="835.6" y="957.9" width="1.8" height="2"/>
 <rect x="823.8" y="960.9" width="2" height="2"/><rect x="826.8" y="960.9" width="2" height="2"/><rect x="829.8" y="960.9" width="2" height="2"/><rect x="832.8" y="960.9" width="2" height="2"/><rect x="835.6" y="960.9" width="1.8" height="2"/>
 <rect x="823.8" y="963.9" width="2" height="2"/><rect x="826.8" y="963.9" width="2" height="2"/><rect x="829.8" y="963.9" width="2" height="2"/><rect x="832.8" y="963.9" width="2" height="2"/><rect x="835.6" y="963.9" width="1.8" height="2"/>
 <rect x="823.8" y="966.9" width="2" height="2"/><rect x="826.8" y="966.9" width="2" height="2"/><rect x="829.8" y="966.9" width="2" height="2"/><rect x="832.8" y="966.9" width="2" height="2"/><rect x="835.6" y="966.9" width="1.8" height="2"/>
 <rect x="823.8" y="969.6" width="2" height="1.6" opacity=".8"/><rect x="826.8" y="969.6" width="2" height="1.6" opacity=".8"/><rect x="829.8" y="969.6" width="2" height="1.6" opacity=".8"/><rect x="832.8" y="969.6" width="2" height="1.6" opacity=".8"/><rect x="835.6" y="969.6" width="1.8" height="1.6" opacity=".8"/></g>
 <path d="M840 962 H846.5 L843.25 966 Z" fill="#2a2a2a"/>
 <g fill="#c6dbf2" stroke="#1d3a6a" stroke-width="1.05"><rect x="853.3" y="957.3" width="7" height="6.2" rx="1"/><rect x="860.6" y="957.3" width="7" height="6.2" rx="1"/><rect x="853.3" y="963.8" width="7" height="6.2" rx="1"/><rect x="860.6" y="963.8" width="7" height="6.2" rx="1"/></g>
 <g fill="#8eaed6"><rect x="855.3" y="959.3" width="3" height="2.2"/><rect x="862.6" y="959.3" width="3" height="2.2"/><rect x="855.3" y="965.8" width="3" height="2.2"/><rect x="862.6" y="965.8" width="3" height="2.2"/></g>
 <path d="M871 962 H877.5 L874.25 966 Z" fill="#2a2a2a"/>
</svg>
<!-- activity -->
<div class="a" style="left:7px;top:951px;width:300px;height:25px;background:#d3d3d3;border:1px solid #a9a9a9"></div>
<div class="a txt" style="left:34px;top:958px;font-size:12.6px;color:#6a6a6a;line-height:13px">ACTIVITY</div>
<svg class="a" style="left:285px;top:958px" width="11" height="11" viewBox="0 0 11 11"><circle cx="5.5" cy="5.5" r="4.6" fill="#2a2a2a"/><rect x="2.6" y="4.6" width="5.8" height="1.9" fill="#fff"/><rect x="4.6" y="2.6" width="1.9" height="5.8" fill="#fff"/></svg>
<div class="a" style="left:302px;top:958px;width:1px;height:11px;background:#7a7a7a"></div>
<div class="a" style="left:304px;top:960px;width:1px;height:7px;background:#8a8a8a"></div>
<!-- timeline -->
<div class="a" style="left:3px;top:979px;width:1517px;height:51px;background:#cecece"></div>
<svg class="a" style="left:0;top:979px" width="1520" height="51" viewBox="0 979 1520 51">
 <defs>
  <linearGradient id="tbx" x1="0" y1="0" x2="0" y2="1"><stop offset="0" stop-color="#fbfbfc"/><stop offset="1" stop-color="#c9ccd4"/></linearGradient>
  <linearGradient id="tbl" x1="0" y1="0" x2="1" y2="0"><stop offset="0" stop-color="#8fb2dc"/><stop offset="1" stop-color="#c0d8f2"/></linearGradient>
  <g id="star"><g stroke="#ec2a00" stroke-width="1.3" stroke-linecap="round"><path d="M0 -3.6 V3.6 M-3.6 0 H3.6 M-2.5 -2.5 L2.5 2.5 M-2.5 2.5 L2.5 -2.5"/></g><circle r="1.9" fill="#ffd000"/><circle r="1.1" fill="#fff8a0"/></g>
  <symbol id="iS" viewBox="0 0 18 17"><rect x="2.3" y="2.6" width="14.2" height="13.8" rx="1.5" fill="url(#tbx)" stroke="#333" stroke-width="1"/><path d="M5.4 6.5 V13.6 H14" fill="none" stroke="#333" stroke-width="0.9"/><rect x="4.6" y="11" width="2.8" height="2.8" fill="#3a72c4"/><path d="M9.2 9 L14.8 3.2 L16.6 5 L11 10.8 L8.8 11.3 Z" fill="#f4c420" stroke="#2a1800" stroke-width="0.9" stroke-linejoin="round"/><path d="M9.2 9 L11 10.8 L8.8 11.3 Z" fill="#fff"/><path d="M14.8 3.2 L15.6 2.4 C16.2 1.8 17.2 2.8 17.4 3.4 L16.6 5 Z" fill="#c86a20" stroke="#2a1800" stroke-width="0.8"/><use href="#star" x="4.4" y="4.3"/></symbol>
  <symbol id="iE" viewBox="0 0 18 17"><path d="M1.3 3.6 L3.6 1.2 H10.8 V13.6 L7.8 16.6 H1.3 Z" fill="#f4f6fa" stroke="#222" stroke-width="1.05" stroke-linejoin="round"/><path d="M1.3 12 V3.6 L3.6 1.2 H10.8 V11" fill="none" stroke="#1d3a6a" stroke-width="1.1"/><rect x="2.6" y="3.8" width="5.6" height="8.4" fill="#a6c4e8"/><path d="M8.4 3.6 L10.4 1.8 V12.5 L8.4 14.5 Z" fill="#c0d6f0"/><path d="M3 14.8 H7.5" stroke="#b8bcc8" stroke-width="1"/><path d="M14.5 16.3 V2 M12.3 4.3 L14.5 1.5 L16.7 4.3" fill="none" stroke="#333" stroke-width="1.05"/></symbol>
  <symbol id="iR" viewBox="0 0 18 17"><path d="M3.5 4.5 C6 2 12 1.8 14.5 4" fill="none" stroke="#2a2a2a" stroke-width="1.1"/><path d="M1.2 3 L1.5 6.8 L5 6 Z" fill="#2a2a2a"/><path d="M1.5 8.5 C3 7 5 6.5 9 6.5 C13 6.5 15 7 16.3 8.5 V14 L14.5 16.2 C12 15.6 7 15.6 5 16.2 L1.5 14 Z" fill="#9cbde2" stroke="#1d3258" stroke-width="1.1" stroke-linejoin="round"/><path d="M2.5 9 C5 8 13 8 15.5 9 L13 10.5 C10 10 6 10 3.5 10.5 Z" fill="#d8eafa"/><path d="M12.5 10.3 L16 8.7 V13.8 L14.5 15.8 L12.5 15.7 Z" fill="#fff"/><path d="M12.7 10.3 V15.8 M12.7 10.3 L16 8.6" fill="none" stroke="#1d3258" stroke-width="1"/></symbol>
  <symbol id="iM" viewBox="0 0 18 17"><path d="M1.3 4.5 C1.3 3.6 2 3.2 3 3.2 H4 L6.5 6 V11 L4.6 10.5 V15.5 C4.6 16.4 3.8 16.8 3 16.8 C2 16.8 1.3 16.4 1.3 15.5 Z" fill="#f4f6fa" stroke="#333" stroke-width="1"/><path d="M8.5 1.2 V16.8" stroke="#3a3a3a" stroke-width="1"/><path d="M15.7 4.5 C15.7 3.6 15 3.2 14 3.2 H13 L10.5 6 V11 L12.4 10.5 V15.5 C12.4 16.4 13.2 16.8 14 16.8 C15 16.8 15.7 16.4 15.7 15.5 Z" fill="#b4d2f2" stroke="#1d3258" stroke-width="1"/></symbol>
  <symbol id="iB" viewBox="0 0 18 17"><path d="M1.3 7.5 L4.4 2.2 H12 L15.5 5.5 V11.8 L11 16.5 H1.3 Z" fill="#fff" stroke="#252a34" stroke-width="1.05" stroke-linejoin="round"/><rect x="2.5" y="8" width="9" height="7.5" fill="url(#tbx)"/><path d="M12 8 L15 5.5 V11.5 L12 14.5 Z" fill="#a8b2c2"/><use href="#star" x="13.5" y="4.5"/></symbol>
  <symbol id="iC" viewBox="0 0 18 17"><path d="M1.5 4.5 C1.5 0.8 16.5 0.8 16.5 4.5 V12.5 C16.5 16.2 1.5 16.2 1.5 12.5 Z" fill="url(#tbl)" stroke="#1d3258" stroke-width="1.1"/><ellipse cx="9" cy="4.5" rx="6.8" ry="2.2" fill="#d6e6f6"/></symbol>
  <symbol id="iF" viewBox="0 0 18 17"><path d="M1.1 5.5 L5.2 1.3 H11 C14.5 1.3 16.8 4 16.8 7.5 V12.3 L12.7 16.7 H1.1 Z" fill="url(#tbx)" stroke="#222" stroke-width="1.05" stroke-linejoin="round"/><path d="M2.2 6 L5.8 2.4 H10 L6 6 Z" fill="#fff"/><path d="M6 5.8 L11 1.3 C14.5 1.3 16.6 4 16.6 7 L13 12 C13 8.5 10 5.8 6 5.8 Z" fill="#a8c8ec" stroke="#1d3258" stroke-width="1"/></symbol>
 </defs>
 <g fill="#4a4a4a">
  <rect x="14" y="995" width="2" height="14"/><path d="M16 1002 L26 995.5 V1008.5 Z"/>
  <path d="M38.5 1002 L48 995.5 V1008.5 Z"/><rect x="49" y="999.5" width="2" height="5"/>
  <rect x="63" y="999.5" width="2" height="5"/><path d="M76 1002 L66 995.5 V1008.5 Z"/>
  <path d="M89 994 L101 1002 L89 1010 Z"/>
  <path d="M124 1002 L114 995.5 V1008.5 Z"/><rect x="124" y="995" width="2" height="14"/>
 </g>
 <rect x="157" y="1019" width="1009" height="2" fill="#555"/>
 <use href="#iS" x="148" y="994" width="18" height="17"/><rect x="157" y="1014" width="2" height="5" fill="#555"/>
 <use href="#iE" x="172" y="994" width="18" height="17"/><rect x="180" y="1014" width="2" height="5" fill="#555"/>
 <use href="#iS" x="196" y="994" width="18" height="17"/><rect x="204" y="1014" width="2" height="5" fill="#555"/>
 <use href="#iR" x="220" y="994" width="18" height="17"/><rect x="228" y="1014" width="2" height="5" fill="#555"/>
 <use href="#iS" x="244" y="994" width="18" height="17"/><rect x="252" y="1014" width="2" height="5" fill="#555"/>
 <use href="#iE" x="268" y="994" width="18" height="17"/><rect x="276" y="1014" width="2" height="5" fill="#555"/>
 <use href="#iS" x="292" y="994" width="18" height="17"/><rect x="300" y="1014" width="2" height="5" fill="#555"/>
 <use href="#iS" x="316" y="994" width="18" height="17"/><rect x="324" y="1014" width="2" height="5" fill="#555"/>
 <use href="#iE" x="340" y="994" width="18" height="17"/><rect x="348" y="1014" width="2" height="5" fill="#555"/>
 <use href="#iS" x="364" y="994" width="18" height="17"/><rect x="372" y="1014" width="2" height="5" fill="#555"/>
 <use href="#iE" x="388" y="994" width="18" height="17"/><rect x="396" y="1014" width="2" height="5" fill="#555"/>
 <use href="#iM" x="412" y="994" width="18" height="17"/><rect x="420" y="1014" width="2" height="5" fill="#555"/>
 <use href="#iB" x="436" y="994" width="18" height="17"/><rect x="444" y="1014" width="2" height="5" fill="#555"/>
 <use href="#iC" x="460" y="994" width="18" height="17"/><rect x="468" y="1014" width="2" height="5" fill="#555"/>
 <use href="#iS" x="484" y="994" width="18" height="17"/><rect x="492" y="1014" width="2" height="5" fill="#555"/>
 <use href="#iE" x="508" y="994" width="18" height="17"/><rect x="516" y="1014" width="2" height="5" fill="#555"/>
 <use href="#iS" x="532" y="994" width="18" height="17"/><rect x="540" y="1014" width="2" height="5" fill="#555"/>
 <use href="#iE" x="556" y="994" width="18" height="17"/><rect x="564" y="1014" width="2" height="5" fill="#555"/>
 <use href="#iS" x="580" y="994" width="18" height="17"/><rect x="588" y="1014" width="2" height="5" fill="#555"/>
 <use href="#iE" x="604" y="994" width="18" height="17"/><rect x="612" y="1014" width="2" height="5" fill="#555"/>
 <use href="#iM" x="628" y="994" width="18" height="17"/><rect x="636" y="1014" width="2" height="5" fill="#555"/>
 <use href="#iS" x="652" y="994" width="18" height="17"/><rect x="660" y="1014" width="2" height="5" fill="#555"/>
 <use href="#iE" x="676" y="994" width="18" height="17"/><rect x="684" y="1014" width="2" height="5" fill="#555"/>
 <use href="#iM" x="700" y="994" width="18" height="17"/><rect x="708" y="1014" width="2" height="5" fill="#555"/>
 <use href="#iF" x="724" y="994" width="18" height="17"/><rect x="732" y="1014" width="2" height="5" fill="#555"/>
 <use href="#iS" x="748" y="994" width="18" height="17"/><rect x="756" y="1014" width="2" height="5" fill="#555"/>
 <use href="#iE" x="772" y="994" width="18" height="17"/><rect x="780" y="1014" width="2" height="5" fill="#555"/>
 <use href="#iS" x="796" y="994" width="18" height="17"/><rect x="804" y="1014" width="2" height="5" fill="#555"/>
 <use href="#iE" x="820" y="994" width="18" height="17"/><rect x="828" y="1014" width="2" height="5" fill="#555"/>
 <use href="#iS" x="844" y="994" width="18" height="17"/><rect x="852" y="1014" width="2" height="5" fill="#555"/>
 <use href="#iE" x="868" y="994" width="18" height="17"/><rect x="876" y="1014" width="2" height="5" fill="#555"/>
 <use href="#iF" x="892" y="994" width="18" height="17"/><rect x="900" y="1014" width="2" height="5" fill="#555"/>
 <use href="#iS" x="916" y="994" width="18" height="17"/><rect x="924" y="1014" width="2" height="5" fill="#555"/>
 <use href="#iE" x="940" y="994" width="18" height="17"/><rect x="948" y="1014" width="2" height="5" fill="#555"/>
 <use href="#iS" x="964" y="994" width="18" height="17"/><rect x="972" y="1014" width="2" height="5" fill="#555"/>
 <use href="#iE" x="988" y="994" width="18" height="17"/><rect x="996" y="1014" width="2" height="5" fill="#555"/>
 <use href="#iS" x="1012" y="994" width="18" height="17"/><rect x="1020" y="1014" width="2" height="5" fill="#555"/>
 <use href="#iE" x="1036" y="994" width="18" height="17"/><rect x="1044" y="1014" width="2" height="5" fill="#555"/>
 <use href="#iS" x="1060" y="994" width="18" height="17"/><rect x="1068" y="1014" width="2" height="5" fill="#555"/>
 <use href="#iE" x="1084" y="994" width="18" height="17"/><rect x="1092" y="1014" width="2" height="5" fill="#555"/>
 <use href="#iF" x="1108" y="994" width="18" height="17"/><rect x="1116" y="1014" width="2" height="5" fill="#555"/>
 <use href="#iF" x="1132" y="994" width="18" height="17"/><rect x="1140" y="1014" width="2" height="5" fill="#555"/>
 <use href="#iF" x="1156" y="994" width="18" height="17"/><rect x="1164" y="1014" width="2" height="5" fill="#555"/>

 <path d="M1170.5 988.5 H1183.5 V992.5 L1178 996.5 V1020.5 H1176 V996.5 L1170.5 992.5 Z" fill="#555"/>
</svg>
<svg class="a" style="left:1493px;top:992px" width="20" height="20" viewBox="0 0 20 20">
 <path d="M10 1.5 L11.6 1.8 L12 4.3 L13.8 5.1 L15.8 3.6 L16.9 4.7 L15.5 6.8 L16.2 8.5 L18.5 9 V11 L16.2 11.5 L15.5 13.2 L16.9 15.3 L15.8 16.4 L13.8 14.9 L12 15.7 L11.6 18.2 H8.4 L8 15.7 L6.2 14.9 L4.2 16.4 L3.1 15.3 L4.5 13.2 L3.8 11.5 L1.5 11 V9 L3.8 8.5 L4.5 6.8 L3.1 4.7 L4.2 3.6 L6.2 5.1 L8 4.3 L8.4 1.8 Z" fill="#5a5a5a"/>
 <circle cx="10" cy="10" r="2.8" fill="#cecece"/>
</svg>
</body></html>
